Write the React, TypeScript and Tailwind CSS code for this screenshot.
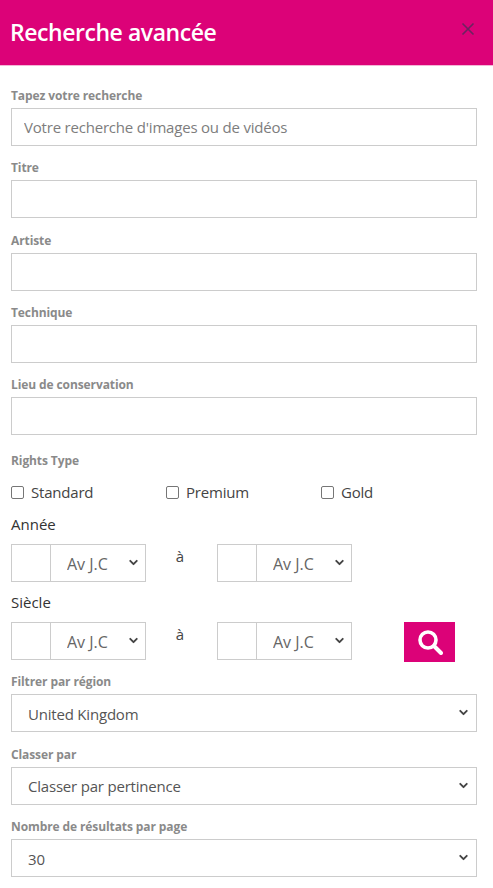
import { ChevronDown } from "lucide-react";

const font = { fontFamily: '"Open Sans", "Noto Sans", sans-serif' };

function Label({ children }: { children: string }) {
  return (
    <label className="block h-[20px] mb-[3px] text-[12px] leading-[22px] font-bold text-[#8a8a8a] tracking-[-0.1px]">
      {children}
    </label>
  );
}

function TextField({ label, placeholder }: { label: string; placeholder?: string }) {
  return (
    <div className="mb-[11.25px]">
      <Label>{label}</Label>
      <input
        placeholder={placeholder}
        className="block w-full h-[38px] px-3 border border-[#cccccc] bg-white text-[15px] tracking-[-0.2px] outline-none placeholder:text-[#7d7d7d]"
      />
    </div>
  );
}

function SelectField({ label, value }: { label: string; value: string }) {
  return (
    <div className="mb-[11.5px]">
      <Label>{label}</Label>
      <div className="relative">
        <select className="block w-full h-[38px] pl-4 pr-8 pt-[2px] border border-[#cccccc] bg-white text-[15px] tracking-[-0.2px] text-[#555555] appearance-none outline-none">
          <option>{value}</option>
        </select>
        <ChevronDown
          size={13}
          strokeWidth={3.5}
          className="absolute right-[7px] top-[12px] text-[#444444] pointer-events-none"
        />
      </div>
    </div>
  );
}

function YearInput() {
  return (
    <div className="flex w-[135px] h-[38px] border border-[#cccccc]">
      <input className="w-[39px] h-full border-r border-[#cccccc] outline-none" />
      <div className="relative flex-1">
        <select className="w-full h-full pl-[16px] pt-[2px] bg-white text-[16px] text-[#666666] appearance-none outline-none">
          <option>Av J.C</option>
        </select>
        <ChevronDown
          size={13}
          strokeWidth={3.5}
          className="absolute right-[5px] top-[11px] text-[#444444] pointer-events-none"
        />
      </div>
    </div>
  );
}

function RangeRow({ children }: { children?: React.ReactNode }) {
  return (
    <div className="flex items-start">
      <YearInput />
      <span className="w-[71px] pt-[1px] pr-[3px] text-center text-[15px] leading-[22px] text-[#444444]">à</span>
      <YearInput />
      {children}
    </div>
  );
}

export default function App() {
  return (
    <div className="w-[493px] h-[888px] bg-white overflow-hidden" style={font}>
      <div className="flex items-start justify-between h-[66px] pl-[10px] pr-[18px] bg-[#dc0278] border-b border-[#f3b6d6]">
        <h1 className="pt-[14px] text-[23px] leading-[36px] font-semibold text-white tracking-[-0.45px]">
          Recherche avancée
        </h1>
        <svg width="14" height="14" viewBox="0 0 14 14" className="mt-[22px] text-[#6b2460]">
          <path d="M1.5 1.5l11 11M12.5 1.5l-11 11" stroke="currentColor" strokeWidth="1.6" />
        </svg>
      </div>

      <div className="pt-[19px] pl-[11px] pr-[16px]">
        <TextField label="Tapez votre recherche" placeholder="Votre recherche d'images ou de vidéos" />
        <TextField label="Titre" />
        <TextField label="Artiste" />
        <TextField label="Technique" />
        <TextField label="Lieu de conservation" />

        <div className="h-[20px] -mt-[0.25px] mb-[12px] pt-[5px]">
          <label className="block text-[12px] leading-[20px] font-bold text-[#8a8a8a] tracking-[-0.1px]">
            Rights Type
          </label>
        </div>
        <div className="grid grid-cols-[155px_155px_155px] h-[24px] mt-[14px] text-[15px] leading-[24px] text-[#444444] tracking-[-0.2px]">
          {["Standard", "Premium", "Gold"].map((name) => (
            <label key={name} className="flex items-center gap-[7px]">
              <input
                type="checkbox"
                className="w-[13px] h-[13px] appearance-none border border-[#767676] rounded-[2px] bg-white"
              />
              {name}
            </label>
          ))}
        </div>

        <p className="mt-[10px] mb-[10px] text-[15px] leading-[20px] text-[#333333]">Année</p>
        <RangeRow />

        <p className="mt-[10px] mb-[10px] text-[15px] leading-[20px] text-[#333333]">Siècle</p>
        <RangeRow>
          <button className="flex items-center justify-center w-[51px] h-[40px] ml-[52px] bg-[#dc0278]">
            <svg width="26" height="26" viewBox="0 0 26 26" fill="none" stroke="white">
              <circle cx="11" cy="11" r="8" strokeWidth="3.6" />
              <path d="M17 17l7 7" strokeWidth="4" strokeLinecap="round" />
            </svg>
          </button>
        </RangeRow>

        <div className="mt-[9px]">
          <SelectField label="Filtrer par région" value="United Kingdom" />
          <SelectField label="Classer par" value="Classer par pertinence" />
          <SelectField label="Nombre de résultats par page" value="30" />
        </div>
      </div>
    </div>
  );
}
